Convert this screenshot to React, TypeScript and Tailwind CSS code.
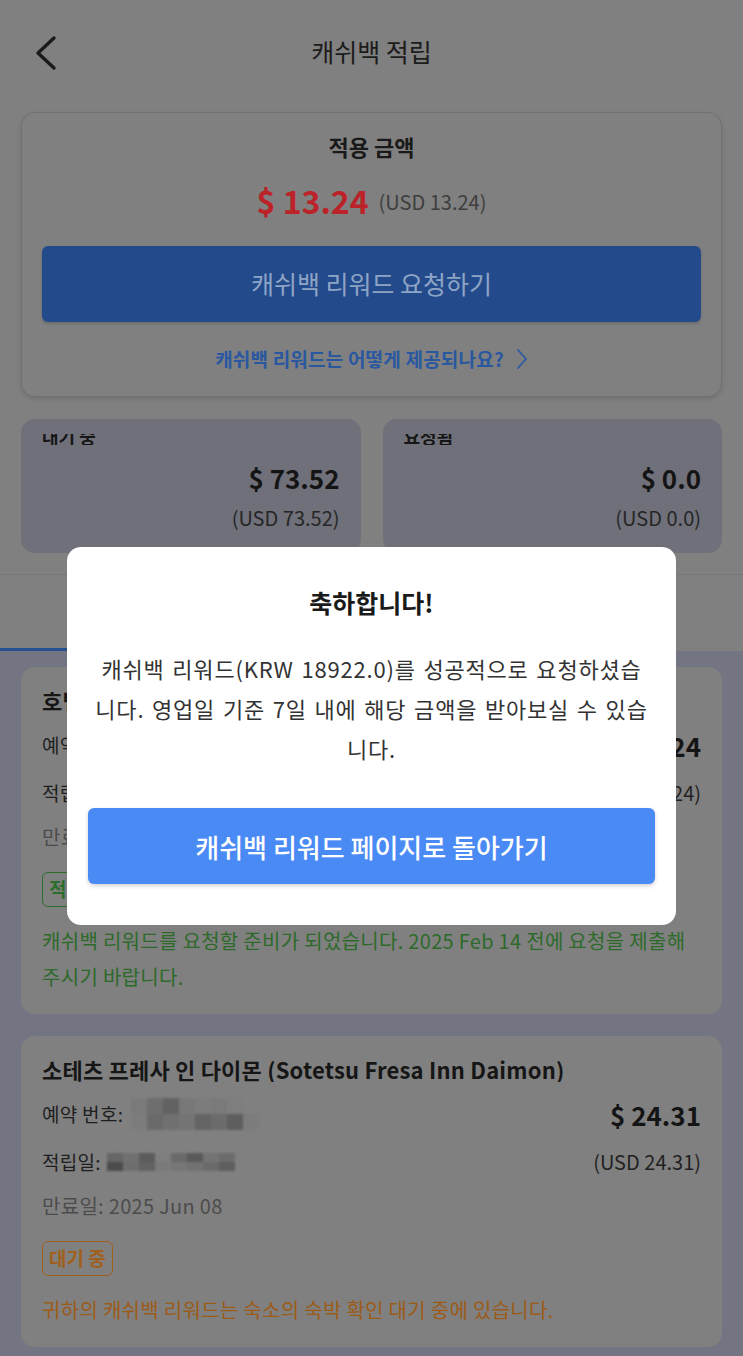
import React from "react";

const mosaicTop = [
  ["#7a7a7a", "#6e6e6e", "#626262", "#787878", "#7c7c7c", "#7a7a7a", "#7e7e7e", "#808080"],
  ["#7c7c7c", "#6a6a6a", "#707070", "#747474", "#646464", "#6c6c6c", "#5e5e5e", "#7c7c7c"],
];
const mosaicBottom = [
  ["#666666", "#707070", "#5c5c5c", "#7e7e7e", "#6a6a6a", "#5a5a5a", "#747474", "#6c6c6c"],
  ["#4c4c4c", "#6e6e6e", "#626262", "#7a7a7a", "#767676", "#727272", "#6a6a6a", "#5e5e5e"],
];

const Mosaic = ({ cells, cellH }: { cells: string[][]; cellH: string }) => (
  <div className="flex flex-col blur-[1px]">
    {cells.map((row, i) => (
      <div key={i} className="flex">
        {row.map((c, j) => (
          <div key={j} className={`w-[16px] ${cellH}`} style={{ backgroundColor: c }} />
        ))}
      </div>
    ))}
  </div>
);

type Booking = {
  title: string;
  amount: string;
  usd: string;
  expiry: string;
  badge: string;
  tone: "green" | "orange";
  message: React.ReactNode;
};

const bookings: Booking[] = [
  {
    title: "호텔 그레이서리 오사카 난바 (Hotel Gracery Osaka Namba)",
    amount: "$ 13.24",
    usd: "(USD 13.24)",
    expiry: "만료일: 2025 Feb 14",
    badge: "적립 가능",
    tone: "green",
    message: (
      <>
        캐쉬백 리워드를 요청할 준비가 되었습니다. 2025 Feb 14 전에 요청을 제출해
        <br />
        주시기 바랍니다.
      </>
    ),
  },
  {
    title: "소테츠 프레사 인 다이몬 (Sotetsu Fresa Inn Daimon)",
    amount: "$ 24.31",
    usd: "(USD 24.31)",
    expiry: "만료일: 2025 Jun 08",
    badge: "대기 중",
    tone: "orange",
    message: "귀하의 캐쉬백 리워드는 숙소의 숙박 확인 대기 중에 있습니다.",
  },
];

const BookingCard = ({ b }: { b: Booking }) => {
  const green = b.tone === "green";
  return (
    <div className="rounded-[14px] bg-[#808080] px-[21px] pt-[20px] pb-[19px]">
      <p className="text-[22px] leading-[26px] font-bold tracking-[0.2px] text-[#161616] whitespace-nowrap overflow-hidden">
        {b.title}
      </p>
      <div className="mt-[14px] flex h-[36px] items-center justify-between">
        <div className="flex items-center gap-[8px]">
          <span className="text-[19px] tracking-[0.3px] text-[#1e1e1e]">예약 번호:</span>
          <Mosaic cells={mosaicTop} cellH="h-[16px]" />
        </div>
        <span className="text-[26px] font-bold text-[#141414]">{b.amount}</span>
      </div>
      <div className="mt-[12px] flex h-[36px] items-center justify-between">
        <div className="flex items-center gap-[6px]">
          <span className="text-[19px] tracking-[0.3px] text-[#1e1e1e]">적립일:</span>
          <Mosaic cells={mosaicBottom} cellH="h-[9px]" />
        </div>
        <span className="text-[20px] text-[#222]">{b.usd}</span>
      </div>
      <p className="mt-[8px] h-[36px] text-[20px] leading-[36px] tracking-[0.3px] text-[#4c4c4c]">{b.expiry}</p>
      <div className="mt-[17px] flex">
        <span
          className={
            green
              ? "flex h-[35px] items-center rounded-[6px] border-[1.5px] border-[#2b6d2b] px-[6px] text-[19px] font-bold text-[#2b6d2b]"
              : "flex h-[35px] items-center rounded-[6px] border-[1.5px] border-[#a0601c] px-[6px] text-[19px] font-bold text-[#a0601c]"
          }
        >
          {b.badge}
        </span>
      </div>
      <p
        className={
          green
            ? "mt-[16px] text-[20px] leading-[36px] tracking-[0.3px] text-[#2d6a2a]"
            : "mt-[16px] text-[20px] leading-[36px] tracking-[0.3px] text-[#9c5b17]"
        }
      >
        {b.message}
      </p>
    </div>
  );
};

const StatCard = ({ label, amount, usd }: { label: string; amount: string; usd: string }) => (
  <div className="flex-1 rounded-[14px] bg-[#6f7079] px-[21px] pb-[21px]">
    <div className="mt-[15px] h-[11px] overflow-hidden">
      <p className="-mt-[7px] text-[18px] leading-[18px] font-bold text-[#161616]">{label}</p>
    </div>
    <p className="mt-[16px] text-right text-[26px] leading-[34px] font-bold text-[#141414]">{amount}</p>
    <p className="mt-[9px] text-right text-[20px] leading-[28px] text-[#262626]">{usd}</p>
  </div>
);

export default function App() {
  return (
    <div className="relative flex min-h-screen w-full flex-col overflow-hidden bg-[#808080] font-['Noto_Sans_CJK_KR',sans-serif]">
      {/* header */}
      <div className="relative flex h-[104px] items-center justify-center">
        <svg className="absolute left-[32px] top-[35px]" width="28" height="36" viewBox="0 0 28 36" fill="none">
          <path d="M22 3 L6 18 L22 33" stroke="#1a1a1a" strokeWidth="3.4" strokeLinecap="round" strokeLinejoin="round" />
        </svg>
        <h1 className="text-[25px] text-[#1c1c1c]">캐쉬백 적립</h1>
      </div>

      <div className="px-[21px]">
        {/* applied amount */}
        <div className="mt-[8px] rounded-[14px] border border-[#717171] bg-[#808080] px-[20px] pt-[20px] pb-[25px] shadow-[0_2px_4px_rgba(0,0,0,0.12)]">
          <p className="text-center text-[22px] leading-[26px] font-bold text-[#1a1a1a]">적용 금액</p>
          <div className="mt-[19px] flex h-[44px] items-center justify-center gap-[10px]">
            <span className="text-[32px] font-bold text-[#bb2329]">$ 13.24</span>
            <span className="mt-[4px] text-[20px] text-[#3e3e3e]">(USD 13.24)</span>
          </div>
          <button className="mt-[24px] flex h-[76px] w-full items-center justify-center rounded-[6px] bg-[#234b8b] text-[25px] text-[#8ea4c6] shadow-[0_2px_3px_rgba(0,0,0,0.15)]">
            캐쉬백 리워드 요청하기
          </button>
          <div className="mt-[25px] flex h-[24px] items-center justify-center gap-[12px]">
            <span className="text-[19px] font-semibold tracking-[0.2px] text-[#2a58a0]">캐쉬백 리워드는 어떻게 제공되나요?</span>
            <svg width="12" height="22" viewBox="0 0 12 22" fill="none">
              <path d="M2 2 L10 11 L2 20" stroke="#2a58a0" strokeWidth="1.8" strokeLinecap="round" strokeLinejoin="round" />
            </svg>
          </div>
        </div>

        {/* totals */}
        <div className="mt-[22px] flex gap-[22px]">
          <StatCard label="대기 중" amount="$ 73.52" usd="(USD 73.52)" />
          <StatCard label="요청됨" amount="$ 0.0" usd="(USD 0.0)" />
        </div>
      </div>

      {/* tabs */}
      <div className="mt-[21px] flex h-[77px] border-t border-[#767676]">
        <div className="flex flex-1 items-center justify-center border-b-[3px] border-[#264f8f] text-[20px] font-semibold text-[#1d3f75]">
          적립 가능
        </div>
        <div className="flex flex-1 items-center justify-center text-[20px] text-[#333]">요청 내역</div>
      </div>

      {/* list */}
      <div className="flex flex-1 flex-col gap-[22px] bg-[#737682] px-[21px] pt-[16px] pb-[20px]">
        {bookings.map((b) => (
          <BookingCard key={b.title} b={b} />
        ))}
      </div>

      {/* success dialog */}
      <div className="absolute left-[67px] top-[547px] w-[609px] rounded-[14px] bg-white px-[21px] pt-[40px] pb-[41px]">
        <p className="text-center text-[25px] leading-[30px] font-bold text-[#1a1a1a]">축하합니다!</p>
        <div className="mt-[31px] text-center text-[22px] leading-[40px] tracking-[0.8px] [word-spacing:2px] text-[#333]">
          <p className="whitespace-nowrap">캐쉬백 리워드(KRW 18922.0)를 성공적으로 요청하셨습</p>
          <p className="whitespace-nowrap">니다. 영업일 기준 7일 내에 해당 금액을 받아보실 수 있습</p>
          <p className="whitespace-nowrap">니다.</p>
        </div>
        <button className="mt-[40px] flex h-[76px] w-full items-center justify-center rounded-[6px] bg-[#4a8af4] text-[26px] font-medium text-white shadow-[0_2px_4px_rgba(0,0,0,0.18)]">
          캐쉬백 리워드 페이지로 돌아가기
        </button>
      </div>
    </div>
  );
}
